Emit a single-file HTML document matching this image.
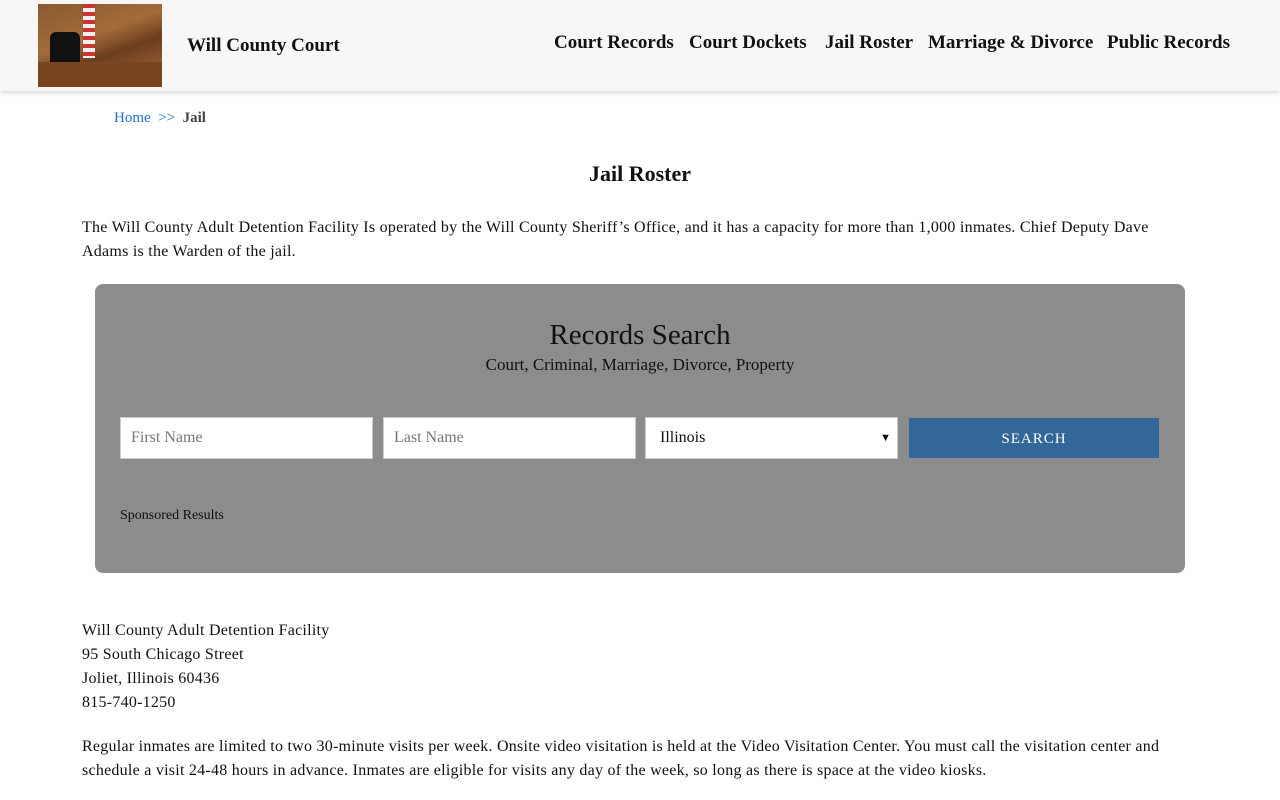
<!DOCTYPE html>
<html><head><meta charset="utf-8"><style>
*{box-sizing:border-box}
body{margin:0;background:#fff;font-family:"Liberation Serif",serif;color:#111;width:1280px;height:800px;overflow:hidden;position:relative}
.hdr{position:absolute;left:0;top:0;width:1280px;height:91px;background:#f7f7f7;box-shadow:0 2px 5px rgba(0,0,0,.15)}
.logo{position:absolute;left:38px;top:4px;width:124px;height:83px;background:linear-gradient(160deg,#8a5a30 0%,#a36b3a 40%,#6b3d1e 60%,#b07040 100%)}
.logo .chair{position:absolute;left:12px;top:28px;width:30px;height:34px;background:#111;border-radius:6px 6px 2px 2px}
.logo .flag{position:absolute;left:45px;top:0;width:12px;height:54px;background:repeating-linear-gradient(#c33 0 4px,#eee 4px 8px)}
.logo .desk{position:absolute;left:0;top:58px;width:124px;height:25px;background:#7a4420}
.brand{position:absolute;left:187px;top:35px;font-size:19px;font-weight:bold}
.nav{position:absolute;top:32px;font-size:19px;font-weight:bold}
.bc{position:absolute;left:114px;top:110px;font-size:15px}
.bc a{color:#1e6fd0}
h1{position:absolute;left:0;width:1280px;text-align:center;top:161px;margin:0;font-size:22px}
p{margin:0;font-size:16px;line-height:24px;letter-spacing:0.25px}
.box{position:absolute;left:95px;top:284px;width:1090px;height:289px;background:#8c8c8c;border-radius:8px}
.box .t{position:absolute;width:100%;text-align:center;top:35px;font-size:29px}
.box .s{position:absolute;width:100%;text-align:center;top:71px;font-size:17px}
.in{position:absolute;top:133px;height:42px;width:253px;background:#fff;border:1px solid #ccc;font-size:16px;color:#777;padding:11px 10px}
.btn{position:absolute;left:814px;top:134px;width:250px;height:40px;background:#336699;color:#fff;text-align:center;line-height:42px;font-size:15px;letter-spacing:1px}
</style></head><body>
<div class="hdr">
<div class="logo"><div class="flag"></div><div class="chair"></div><div class="desk"></div></div>
<div class="brand">Will County Court</div>
<div class="nav" style="left:554px">Court Records</div>
<div class="nav" style="left:689px">Court Dockets</div>
<div class="nav" style="left:825px">Jail Roster</div>
<div class="nav" style="left:928px">Marriage &amp; Divorce</div>
<div class="nav" style="left:1107px">Public Records</div>
</div>
<div class="bc"><a>Home</a> <span style="color:#1e6fd0">&nbsp;&gt;&gt;&nbsp;</span> <b style="color:#444">Jail</b></div>
<h1>Jail Roster</h1>
<p style="position:absolute;left:82px;top:216px;width:1100px">The Will County Adult Detention Facility Is operated by the Will County Sheriff’s Office, and it has a capacity for more than 1,000 inmates. Chief Deputy Dave Adams is the Warden of the jail.</p>
<div class="box">
<div class="t">Records Search</div>
<div class="s">Court, Criminal, Marriage, Divorce, Property</div>
<div class="in" style="left:25px">First Name</div>
<div class="in" style="left:288px">Last Name</div>
<div class="in" style="left:550px;color:#111;padding-left:14px">Illinois<span style="position:absolute;right:6px;font-size:11px;top:14px">&#9660;</span></div>
<div class="btn">SEARCH</div>
<div style="position:absolute;left:25px;top:224px;font-size:14px">Sponsored Results</div>
</div>
<p style="position:absolute;left:82px;top:619px">Will County Adult Detention Facility<br>95 South Chicago Street<br>Joliet, Illinois 60436<br>815-740-1250</p>
<p style="position:absolute;left:82px;top:735px;width:1110px">Regular inmates are limited to two 30-minute visits per week. Onsite video visitation is held at the Video Visitation Center. You must call the visitation center and schedule a visit 24-48 hours in advance. Inmates are eligible for visits any day of the week, so long as there is space at the video kiosks.</p>
</body></html>
